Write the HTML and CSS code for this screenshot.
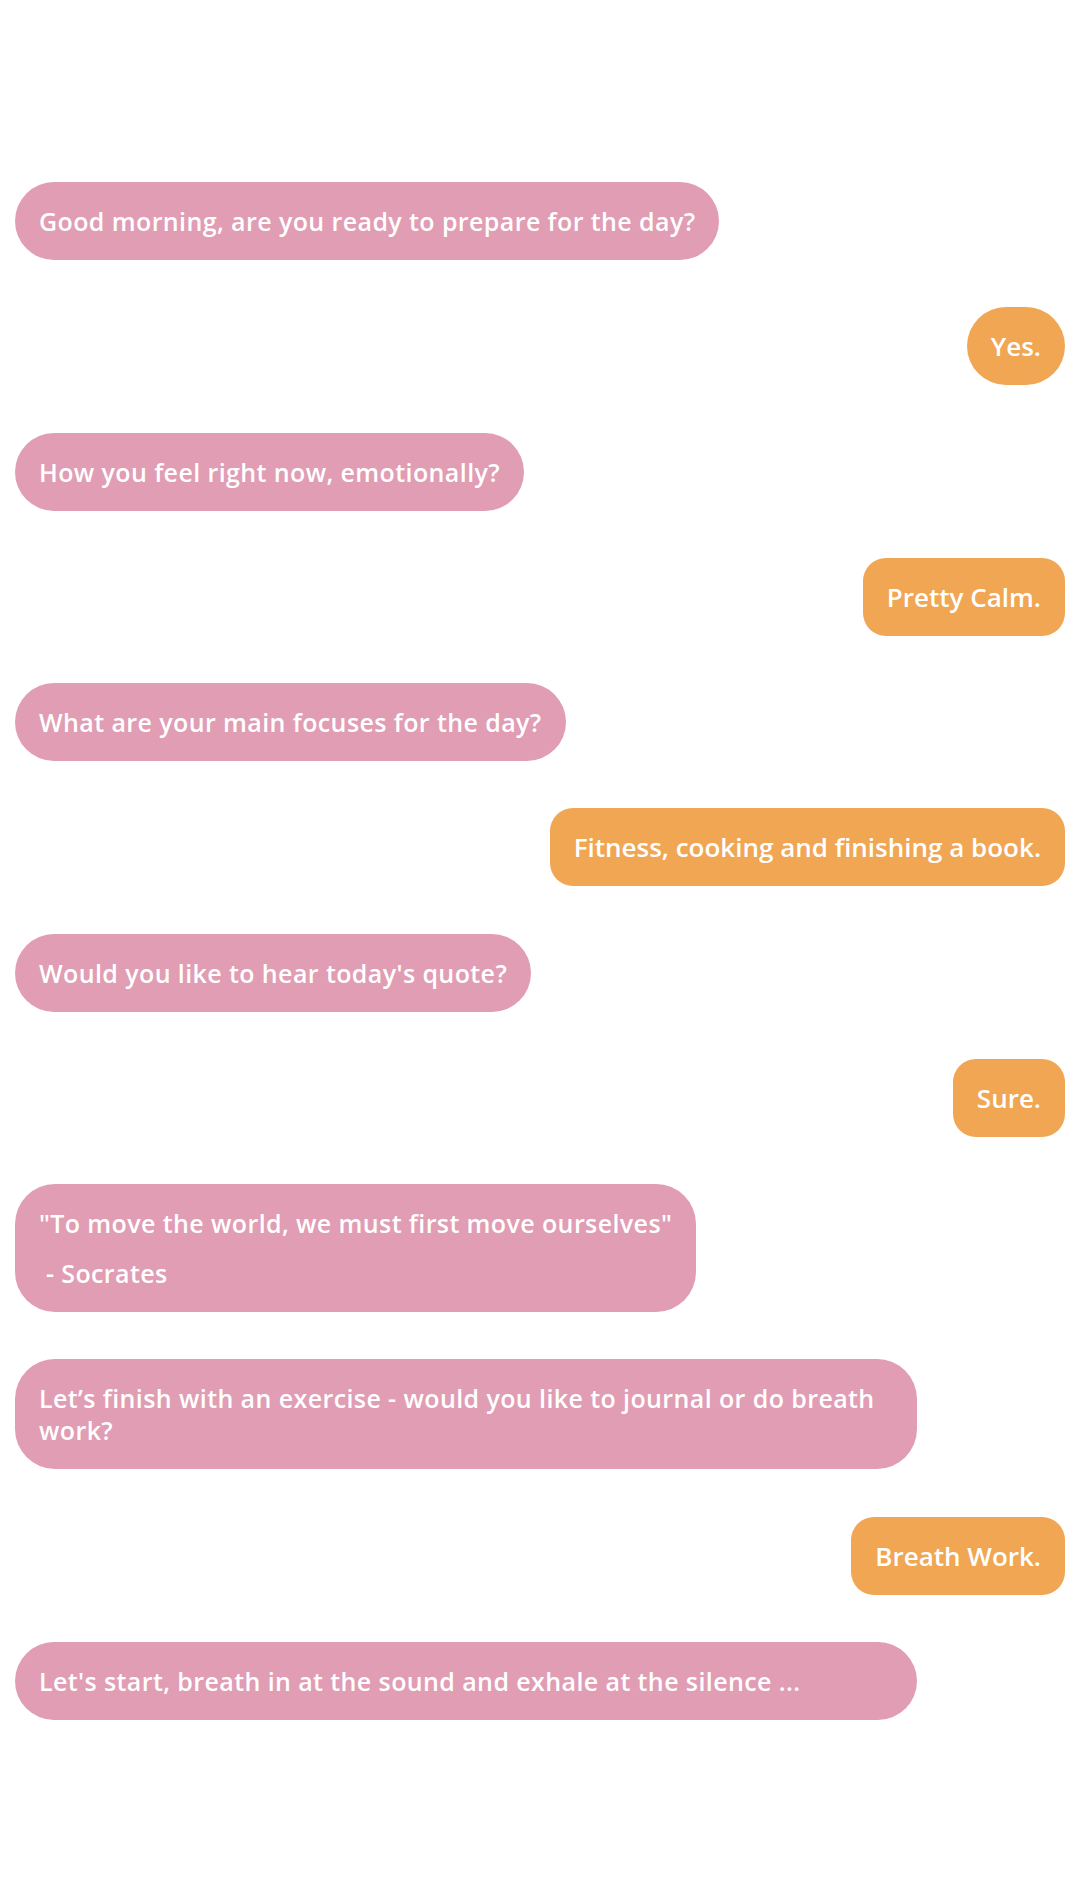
FILE: index.html
```html
<!DOCTYPE html>
<html lang="en">
<head>
<meta charset="utf-8">
<title>Morning chat</title>
<link rel="stylesheet" href="styles.css">
</head>
<body>
<main class="chat">
  <div class="msg bot">Good morning, are you ready to prepare for the day?</div>
  <div class="msg me round">Yes.</div>
  <div class="msg bot">How you feel right now, emotionally?</div>
  <div class="msg me">Pretty Calm.</div>
  <div class="msg bot">What are your main focuses for the day?</div>
  <div class="msg me">Fitness, cooking and finishing a book.</div>
  <div class="msg bot">Would you like to hear today's quote?</div>
  <div class="msg me">Sure.</div>
  <div class="msg bot quote">
    <p class="line">"To move the world, we must first move ourselves"</p>
    <p class="line">&nbsp;- Socrates</p>
  </div>
  <div class="msg bot wide">Let’s finish with an exercise - would you like to journal or do breath work?</div>
  <div class="msg me">Breath Work.</div>
  <div class="msg bot wide">Let's start, breath in at the sound and exhale at the silence ...</div>
</main>
</body>
</html>
```

FILE: styles.css
```css
html, body {
  margin: 0;
  padding: 0;
  background: #ffffff;
}

.chat {
  display: flex;
  flex-direction: column;
  gap: 47.25px;
  padding: 182px 15px 120px 15px;
  font-family: "Open Sans", "DejaVu Sans", sans-serif;
}

.msg {
  box-sizing: border-box;
  padding: 23px 24px;
  line-height: 32px;
  font-weight: 600;
  color: #ffffff;
  max-width: 902px;
}

.bot {
  align-self: flex-start;
  background: #e09db3;
  border-radius: 40px;
  font-size: 25px;
  letter-spacing: 0.4px;
}

.me {
  align-self: flex-end;
  background: #f0a653;
  border-radius: 23px;
  font-size: 26px;
}

.me.round {
  border-radius: 39px;
}

.wide {
  width: 902px;
}

.quote {
  display: flex;
  flex-direction: column;
  gap: 18px;
}

.line {
  margin: 0;
}
```
